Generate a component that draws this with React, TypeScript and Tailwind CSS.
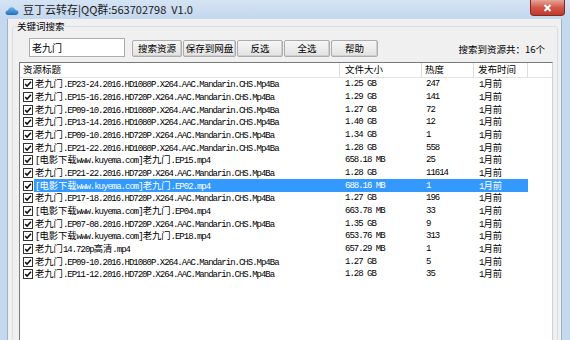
import React from "react";

type Row = {
    title: string,
    size: string,
    heat: string,
}

const rows: Row[] = [
    { title: "老九门.EP23-24.2016.HD1080P.X264.AAC.Mandarin.CHS.Mp4Ba", size: "1.25 GB", heat: "247" },
    { title: "老九门.EP15-16.2016.HD720P.X264.AAC.Mandarin.CHS.Mp4Ba", size: "1.29 GB", heat: "141" },
    { title: "老九门.EP09-10.2016.HD1080P.X264.AAC.Mandarin.CHS.Mp4Ba", size: "1.27 GB", heat: "72" },
    { title: "老九门.EP13-14.2016.HD1080P.X264.AAC.Mandarin.CHS.Mp4Ba", size: "1.40 GB", heat: "12" },
    { title: "老九门.EP09-10.2016.HD720P.X264.AAC.Mandarin.CHS.Mp4Ba", size: "1.34 GB", heat: "1" },
    { title: "老九门.EP21-22.2016.HD1080P.X264.AAC.Mandarin.CHS.Mp4Ba", size: "1.28 GB", heat: "558" },
    { title: "[电影下载www.kuyema.com]老九门.EP15.mp4", size: "658.18 MB", heat: "25" },
    { title: "老九门.EP21-22.2016.HD720P.X264.AAC.Mandarin.CHS.Mp4Ba", size: "1.28 GB", heat: "11614" },
    { title: "[电影下载www.kuyema.com]老九门.EP02.mp4", size: "688.16 MB", heat: "1" },
    { title: "老九门.EP17-18.2016.HD720P.X264.AAC.Mandarin.CHS.Mp4Ba", size: "1.27 GB", heat: "196" },
    { title: "[电影下载www.kuyema.com]老九门.EP04.mp4", size: "663.78 MB", heat: "33" },
    { title: "老九门.EP07-08.2016.HD720P.X264.AAC.Mandarin.CHS.Mp4Ba", size: "1.35 GB", heat: "9" },
    { title: "[电影下载www.kuyema.com]老九门.EP18.mp4", size: "653.76 MB", heat: "313" },
    { title: "老九门14.720p高清.mp4", size: "657.29 MB", heat: "1" },
    { title: "老九门.EP09-10.2016.HD1080P.X264.AAC.Mandarin.CHS.Mp4Ba", size: "1.27 GB", heat: "5" },
    { title: "老九门.EP11-12.2016.HD720P.X264.AAC.Mandarin.CHS.Mp4Ba", size: "1.28 GB", heat: "35" },
];

const SELECTED = 8;
const CJK = /([\u2E80-\u9FFF\uFF00-\uFFEF]+)/;

// the list font: narrow latin, wider chinese
function Mixed({ text }: { text: string }) {
    const parts = text.split(CJK);
    return (
        <>
            {parts.map((p, i) =>
                CJK.test(p)
                    ? <span key={i} className="font-['Noto_Sans_CJK_SC',sans-serif] text-[9.3px] tracking-normal">{p}</span>
                    : <span key={i}>{p}</span>
            )}
        </>
    );
}

function CheckBox() {
    return (
        <div className="w-[10px] h-[10px] shrink-0 border border-[#333] bg-white flex items-center justify-center">
            <svg width="8" height="8" viewBox="0 0 8 8">
                <path d="M1.2 4.1 L3.1 6 L6.9 1.8" fill="none" stroke="#111" strokeWidth="1.6" />
            </svg>
        </div>
    );
}

function Button({ label, width }: { label: string, width: string }) {
    return (
        <button className={`${width} h-[17px] flex items-center justify-center border border-[#acacac] rounded-[2px] bg-gradient-to-b from-[#f6f6f6] to-[#e2e2e2] shadow-[inset_-1px_-1px_0_#cfcfcf] text-[9.5px] text-black`}>
            {label}
        </button>
    );
}

function Cloud() {
    return (
        <svg width="14" height="11" viewBox="0 0 14 11">
            <defs>
                <linearGradient id="cg" x1="0" y1="0" x2="0" y2="1">
                    <stop offset="0" stopColor="#6fb2ee" />
                    <stop offset="1" stopColor="#1f6fc4" />
                </linearGradient>
            </defs>
            <path d="M3.2 10 C1.2 10 0.3 8.6 0.6 7.2 C0.9 6 2 5.4 3 5.6 C3.3 3.4 5 2 7 2.2 C8.8 2.4 10 3.6 10.3 5 C12 4.9 13.5 6 13.4 7.6 C13.3 9.1 12.2 10 10.8 10 Z" fill="url(#cg)" />
        </svg>
    );
}

export default function App() {
    return (
        <div className="w-[570px] h-[340px] overflow-hidden bg-[#c4d8ee] flex flex-col font-['Noto_Sans_CJK_SC','Noto_Sans',sans-serif] text-black">
            <div className="h-[19px] shrink-0 flex items-center bg-gradient-to-b from-[#d5e4f4] to-[#c3d7ee]">
                <div className="ml-[5px] mt-[1px]"><Cloud /></div>
                <div className="ml-[4px] text-[11px] leading-none font-normal text-[#1a1a1a]">豆丁云转存|QQ群:563702798&nbsp;&nbsp;V1.0</div>
                <div className="ml-auto mr-[5px] self-start w-[35px] h-[16px] rounded-b-[4px] border border-t-0 border-[#7c2a22] bg-gradient-to-b from-[#e5a597] via-[#d2574a] to-[#c0392b] flex items-center justify-center">
                    <svg width="9" height="8" viewBox="0 0 9 8">
                        <path d="M1.5 1 L7.5 7 M7.5 1 L1.5 7" stroke="white" strokeWidth="2" />
                    </svg>
                </div>
            </div>

            <div className="flex-1 ml-[7px] mr-[8px] bg-[#f0f0f0] border-l border-r border-[#9fb3c8] flex flex-col">
                <fieldset className="mt-[1px] ml-[4px] mr-[3px] border border-[#d5dfe5] rounded-[3px] p-0 flex-1 min-h-0">
                    <legend className="ml-[4px] px-0 text-[9.5px] leading-[13px]">关键词搜索</legend>

                    <div className="flex items-end pt-[5px]">
                        <div className="ml-[16px] w-[96px] h-[19px] bg-white border border-[#abadb3] pl-[2px] text-[10px] leading-[17px]">老九门</div>
                        <div className="ml-[7px] flex gap-[1px]">
                            <Button label="搜索资源" width="w-[50px]" />
                            <Button label="保存到网盘" width="w-[53px]" />
                            <Button label="反选" width="w-[46px]" />
                            <Button label="全选" width="w-[46px]" />
                            <Button label="帮助" width="w-[47px]" />
                        </div>
                        <div className="ml-auto mr-[12px] mb-[3px] text-[9.5px] leading-none">搜索到资源共：16个</div>
                    </div>

                    <div className="ml-[6px] mr-[4px] mt-[5px] h-[300px] bg-white border border-[#7a7a7a] border-r-[#d0d0d0] flex flex-col">
                        <div className="h-[15px] shrink-0 flex items-start text-[9.5px] leading-[13px] border-b border-[#e3e3e3]">
                            <div className="w-[320px] h-[14px] pl-[3px] border-r border-[#dcdcdc]">资源标题</div>
                            <div className="w-[82px] h-[14px] pl-[5px] border-r border-[#dcdcdc]">文件大小</div>
                            <div className="w-[52px] h-[14px] pl-[3px] border-r border-[#dcdcdc]">热度</div>
                            <div className="w-[54px] h-[14px] pl-[4px] border-r border-[#dcdcdc]">发布时间</div>
                        </div>
                        {rows.map((r, i) => {
                            const sel = i === SELECTED;
                            return (
                                <div key={i} className="h-[12.67px] shrink-0 flex items-center font-['Liberation_Mono','Noto_Sans_CJK_SC',monospace] text-[9px] tracking-[-1px] leading-[12px] whitespace-nowrap">
                                    <div className="w-[14px] pl-[3px] flex items-center"><CheckBox /></div>
                                    <div className={`w-[494px] h-full flex items-center ${sel ? "bg-[#3399ff] text-white" : ""}`}>
                                        <div className="w-[306px] pl-[1px]"><Mixed text={r.title} /></div>
                                        <div className="w-[82px] pl-[5px]"><Mixed text={r.size} /></div>
                                        <div className="w-[52px] pl-[4px]"><Mixed text={r.heat} /></div>
                                        <div className="w-[54px] pl-[5px]"><Mixed text="1月前" /></div>
                                    </div>
                                </div>
                            );
                        })}
                    </div>
                </fieldset>
            </div>
        </div>
    );
}
